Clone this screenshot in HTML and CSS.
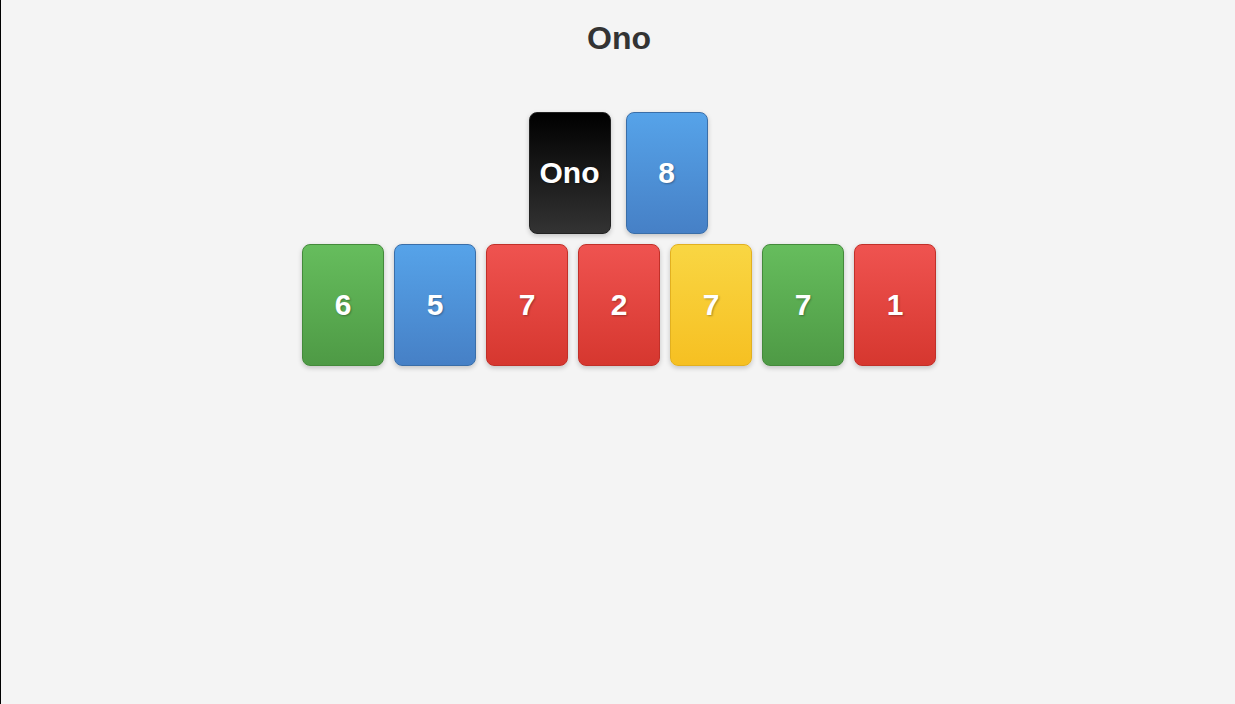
FILE: index.html
```html
<!DOCTYPE html>
<html lang="en">
<head>
<meta charset="utf-8">
<title>Ono</title>
<link rel="stylesheet" href="styles.css">
</head>
<body>
<main class="game">
  <h1 class="title">Ono</h1>
  <div class="table">
    <div class="card card-black">Ono</div>
    <div class="card card-blue">8</div>
  </div>
  <div class="hand">
    <div class="card card-green">6</div>
    <div class="card card-blue">5</div>
    <div class="card card-red">7</div>
    <div class="card card-red">2</div>
    <div class="card card-yellow">7</div>
    <div class="card card-green">7</div>
    <div class="card card-red">1</div>
  </div>
</main>
</body>
</html>
```

FILE: styles.css
```css
html, body {
  margin: 0;
  padding: 0;
  height: 100%;
}
body {
  background: #f4f4f4;
  border-left: 1px solid #000;
  box-sizing: border-box;
  font-family: "Liberation Sans", Arial, sans-serif;
  color: #333;
}
.game {
  display: flex;
  flex-direction: column;
  align-items: center;
}
.title {
  margin: 20px 0 0 2px;
  font-size: 32px;
  font-weight: bold;
  line-height: normal;
  color: #333;
}
.table {
  display: flex;
  gap: 15px;
  margin-top: 55px;
}
.hand {
  display: flex;
  gap: 10px;
  margin: 10px 0 0 2px;
}
.card {
  width: 80px;
  height: 120px;
  border: 1px solid rgba(0,0,0,0.25);
  border-radius: 8px;
  display: flex;
  align-items: center;
  justify-content: center;
  color: #fff;
  font-size: 30px;
  font-weight: bold;
  text-shadow: 1px 1px 2px rgba(0,0,0,0.3);
  box-shadow: 0 2px 5px rgba(0,0,0,0.2);
}
.card-black {
  background: linear-gradient(#000, #333);
  border-color: #222;
}
.card-blue {
  background: linear-gradient(#56a3e9, #4680c6);
  border-color: #3a6ea8;
}
.card-green {
  background: linear-gradient(#66bd5d, #4e9a45);
  border-color: #448a3b;
}
.card-red {
  background: linear-gradient(#ef5350, #d6372f);
  border-color: #c13029;
}
.card-yellow {
  background: linear-gradient(#f9d643, #f6c022);
  border-color: #e2b020;
}
```
